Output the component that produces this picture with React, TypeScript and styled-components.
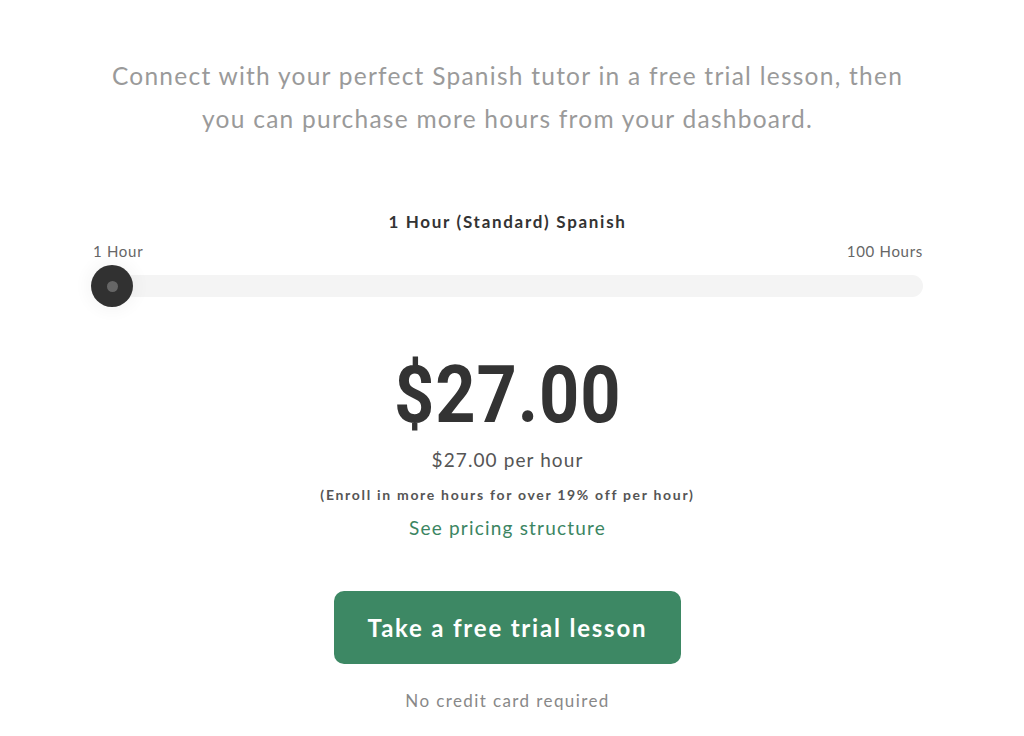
import React from "react";
import styled, { createGlobalStyle } from "styled-components";

const Global = createGlobalStyle`
  html, body { margin: 0; padding: 0; background: #ffffff; }
  body { font-family: Lato, "Noto Sans", sans-serif; }
`;

const Page = styled.div`
  width: 1024px;
  height: 736px;
  box-sizing: border-box;
  padding: 54px 101px 0 92px;
  display: flex;
  flex-direction: column;
  align-items: center;
  overflow: hidden;
`;

const Intro = styled.p`
  margin: 0;
  width: 100%;
  text-align: center;
  font-size: 24.5px;
  line-height: 43px;
  letter-spacing: 1.25px;
  color: #9a9a9a;
  font-weight: 400;
`;

const SliderBlock = styled.div`
  width: 100%;
  margin-top: 70px;
  display: flex;
  flex-direction: column;
`;

const PlanTitle = styled.div`
  text-align: center;
  font-size: 17px;
  font-weight: 700;
  color: #333;
  line-height: 24px;
  letter-spacing: 1.7px;
`;

const Ends = styled.div`
  display: flex;
  justify-content: space-between;
  margin-top: 7px;
  font-size: 15px;
  color: #666;
  line-height: 20px;
  letter-spacing: 0.7px;
  padding-left: 1px;
`;

const Track = styled.div`
  position: relative;
  margin-top: 14px;
  height: 22px;
  border-radius: 11px;
  background: #f4f4f4;
`;

const Thumb = styled.div`
  position: absolute;
  left: -1px;
  top: -10px;
  width: 42px;
  height: 42px;
  border-radius: 50%;
  background: #313131;
  box-shadow: 0 0 14px 6px rgba(0, 0, 0, 0.03);
  display: flex;
  align-items: center;
  justify-content: center;
`;

const ThumbDot = styled.div`
  width: 11px;
  height: 11px;
  border-radius: 50%;
  background: #666;
`;

const Price = styled.div`
  margin-top: 56px;
  font-family: Roboto, "DejaVu Sans Condensed", sans-serif;
  font-weight: 700;
  font-size: 79px;
  line-height: 84px;
  color: #333;
  letter-spacing: 1px;
  transform: scaleX(0.89);
`;

const PerHour = styled.div`
  margin-top: 10px;
  font-size: 19px;
  line-height: 26px;
  letter-spacing: 1.1px;
  color: #555;
`;

const Note = styled.div`
  margin-top: 12px;
  font-size: 14px;
  font-weight: 700;
  line-height: 20px;
  letter-spacing: 1.7px;
  color: #555;
`;

const PricingLink = styled.a`
  margin-top: 10px;
  font-size: 19px;
  line-height: 26px;
  letter-spacing: 1.2px;
  color: #3b8562;
  text-decoration: none;
  cursor: pointer;
`;

const CTA = styled.button`
  margin-top: 50px;
  width: 347px;
  height: 73px;
  border: none;
  border-radius: 10px;
  background: #3d8864;
  color: #fff;
  font-family: Lato, "Noto Sans", sans-serif;
  font-size: 24px;
  font-weight: 700;
  letter-spacing: 1.8px;
  cursor: pointer;
`;

const Small = styled.div`
  margin-top: 25px;
  font-size: 17px;
  line-height: 24px;
  letter-spacing: 1.4px;
  color: #888;
`;

export default function App() {
  return (
    <>
      <Global />
      <Page>
        <Intro>
          Connect with your perfect Spanish tutor in a free trial lesson, then
          <br />
          you can purchase more hours from your dashboard.
        </Intro>
        <SliderBlock>
          <PlanTitle>1 Hour (Standard) Spanish</PlanTitle>
          <Ends>
            <span>1 Hour</span>
            <span>100 Hours</span>
          </Ends>
          <Track>
            <Thumb>
              <ThumbDot />
            </Thumb>
          </Track>
        </SliderBlock>
        <Price>$27.00</Price>
        <PerHour>$27.00 per hour</PerHour>
        <Note>(Enroll in more hours for over 19% off per hour)</Note>
        <PricingLink>See pricing structure</PricingLink>
        <CTA>Take a free trial lesson</CTA>
        <Small>No credit card required</Small>
      </Page>
    </>
  );
}
